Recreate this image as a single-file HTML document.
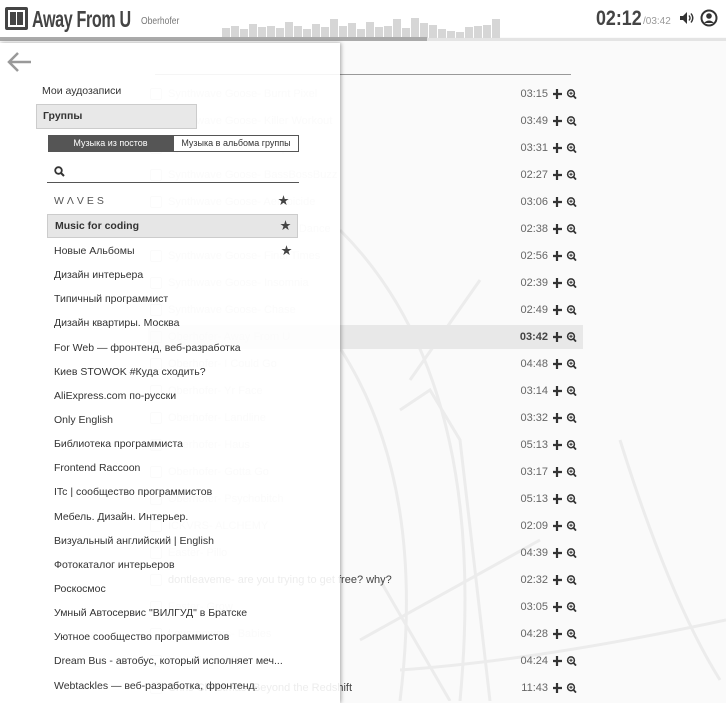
<!DOCTYPE html>
<html><head><meta charset="utf-8"><style>
*{margin:0;padding:0;box-sizing:border-box}
body{width:726px;height:701px;overflow:hidden;background:#fafafa;font-family:"Liberation Sans",Arial,"Noto Sans CJK SC",sans-serif;position:relative;color:#333}
.hdr{position:absolute;left:0;top:0;width:726px;height:37px;background:#fff}
.logo{position:absolute;left:5px;top:7px;width:23px;height:23px;border:3px solid #444;border-radius:2px;background:#fff}
.logo:before,.logo:after{content:"";position:absolute;top:2px;width:6px;height:13px;background:#444}
.logo:before{left:2px}.logo:after{right:2px}
.title{position:absolute;left:32px;top:6px;font-size:23px;font-weight:bold;color:#444;letter-spacing:-0.5px;transform:scaleX(.7);transform-origin:left;white-space:nowrap}
.sub{position:absolute;left:141px;top:16px;font-size:10px;color:#777;transform:scaleX(.85);transform-origin:left}
.bar{position:absolute;top:37px;height:4px}
.time{position:absolute;left:596px;top:7px;font-size:21px;font-weight:bold;color:#444;transform:scaleX(.85);transform-origin:left}
.tot{position:absolute;left:643px;top:16px;font-size:10px;color:#999}
.row{position:absolute;left:148px;width:435px;height:24px;font-size:11px;color:#d0d0d0;line-height:24px}
.row .pl{position:absolute;left:2px;top:6px;width:12px;height:12px;border:1.5px solid #d5d5d5;border-radius:2px}
.row .nm{position:absolute;left:20px}
.row .tm{position:absolute;right:35px;color:#666}
.row .ic{position:absolute;right:2px;top:7px;width:28px;height:10px}
.row.on{background:#e8e8e8}
.row.on .tm{font-weight:bold;color:#444}
.panel{position:absolute;left:0;top:43px;width:340px;height:660px;background:rgba(255,255,255,.9);box-shadow:1px 0 4px rgba(0,0,0,.35)}
.it{position:absolute;left:47px;width:251px;height:24px;line-height:24px;padding-left:7px;font-size:10.5px;color:#333}
.st{position:absolute;right:6px;top:0;font-size:11px;color:#444}
</style></head><body>
<div class="hdr">
<div class="logo"></div>
<div class="title">Away From U</div>
<div class="sub">Oberhofer</div>
<svg style="position:absolute;left:222px;top:14px" width="282" height="24">
<g fill="#d6d6d6">
<rect x="0" y="14" width="8" height="10"/><rect x="9" y="12" width="8" height="12"/><rect x="18" y="15" width="8" height="9"/><rect x="27" y="10" width="8" height="14"/><rect x="36" y="13" width="8" height="11"/><rect x="45" y="12" width="8" height="12"/><rect x="54" y="14" width="8" height="10"/><rect x="63" y="8" width="8" height="16"/><rect x="72" y="12" width="8" height="12"/><rect x="81" y="15" width="8" height="9"/><rect x="90" y="10" width="8" height="14"/><rect x="99" y="13" width="8" height="11"/><rect x="108" y="5" width="8" height="19"/><rect x="117" y="12" width="8" height="12"/><rect x="126" y="9" width="8" height="15"/><rect x="135" y="15" width="8" height="9"/><rect x="144" y="8" width="8" height="16"/><rect x="153" y="13" width="8" height="11"/><rect x="162" y="12" width="8" height="12"/><rect x="171" y="5" width="8" height="19"/><rect x="180" y="14" width="8" height="10"/><rect x="189" y="4" width="8" height="20"/><rect x="198" y="9" width="8" height="15"/><rect x="207" y="11" width="8" height="13"/><rect x="216" y="15" width="8" height="9"/><rect x="225" y="17" width="8" height="7"/><rect x="234" y="18" width="8" height="6"/><rect x="243" y="13" width="8" height="11"/><rect x="252" y="12" width="8" height="12"/><rect x="261" y="11" width="8" height="13"/><rect x="270" y="5" width="8" height="19"/>
</g></svg>
<div class="time">02:12</div><div class="tot">/03:42</div>
<svg style="position:absolute;left:679px;top:11px" width="16" height="14" viewBox="0 0 16 14"><path d="M1 5h3l4-4v12l-4-4H1z" fill="#333"/><path d="M10 4.5q2 2.5 0 5M12 2.5q3.5 4.5 0 9" fill="none" stroke="#333" stroke-width="1.4"/></svg>
<svg style="position:absolute;left:700px;top:9px" width="18" height="18" viewBox="0 0 18 18"><circle cx="9" cy="9" r="7.5" fill="none" stroke="#333" stroke-width="2"/><circle cx="9" cy="7" r="2.8" fill="#333"/><path d="M4 14 Q9 9 14 14" fill="#333"/></svg>
</div>
<div class="bar" style="left:0;width:427px;background:#aaa"></div>
<div class="bar" style="left:427px;width:299px;background:#e4e4e4;top:38px;height:3px"></div>
<svg style="position:absolute;left:340px;top:200px" width="386" height="501"><g fill="none" stroke="#ececec" stroke-width="3"><path d="M0 30 Q150 180 120 501"/><path d="M-20 120 Q90 260 60 501"/><path d="M70 180 L140 80"/><path d="M60 210 L90 190 L120 240 L150 501"/><path d="M20 440 L200 340"/><path d="M40 380 L110 501"/><path d="M280 240 Q330 400 380 480"/><path d="M60 470 Q200 460 386 420"/></g></svg>
<div style="position:absolute;left:155px;top:74px;width:416px;height:1px;background:#999"></div>
<div id="tracks"></div>
<div class="panel">
<svg style="position:absolute;left:6px;top:8px" width="26" height="22"><path d="M25 11H3M12 2L3 11l9 9" fill="none" stroke="#999" stroke-width="2.5"/></svg>
<div style="position:absolute;left:42px;top:42px;font-size:10.5px;color:#333">Мои аудозаписи</div>
<div style="position:absolute;left:36px;top:61px;width:161px;height:25px;background:#e8e8e8;border:1px solid #ccc;font-size:10.5px;font-weight:bold;line-height:23px;padding-left:6px">Группы</div>
<div style="position:absolute;left:48px;top:92px;width:125px;height:17px;background:#555;color:#fff;font-size:9px;line-height:17px;text-align:center">Музыка из постов</div>
<div style="position:absolute;left:173px;top:92px;width:126px;height:17px;border:1px solid #555;color:#333;font-size:9px;line-height:15px;text-align:center;background:#fff">Музыка в альбома группы</div>
<svg style="position:absolute;left:54px;top:123px" width="11" height="11" viewBox="0 0 11 11"><circle cx="4.5" cy="4.5" r="3.3" fill="none" stroke="#333" stroke-width="1.8"/><path d="M7 7l3 3" stroke="#333" stroke-width="2"/></svg>
<div style="position:absolute;left:47px;top:139px;width:252px;height:1px;background:#555"></div>
<div class="it" style="top:146px;letter-spacing:3px;color:#555">WΛVES<span class="st">★</span></div>
<div class="it" style="top:171px;background:#e6e6e6;border:1px solid #ccc;font-weight:bold;line-height:22px">Music for coding<span class="st">★</span></div>
<div class="it" style="top:196px">Новые Альбомы<span class="st">★</span></div>
<div class="it" style="top:220px">Дизайн интерьера</div>
<div class="it" style="top:244px">Типичный программист</div>
<div class="it" style="top:268px">Дизайн квартиры. Москва</div>
<div class="it" style="top:293px">For Web — фронтенд, веб-разработка</div>
<div class="it" style="top:317px">Киев STOWOK #Куда сходить?</div>
<div class="it" style="top:341px">AliExpress.com по-русски</div>
<div class="it" style="top:365px">Only English</div>
<div class="it" style="top:389px">Библиотека программиста</div>
<div class="it" style="top:413px">Frontend Raccoon</div>
<div class="it" style="top:437px">ITc | сообщество программистов</div>
<div class="it" style="top:462px">Мебель. Дизайн. Интерьер.</div>
<div class="it" style="top:486px">Визуальный английский | English</div>
<div class="it" style="top:510px">Фотокаталог интерьеров</div>
<div class="it" style="top:534px">Роскосмос</div>
<div class="it" style="top:558px">Умный Автосервис "ВИЛГУД" в Братске</div>
<div class="it" style="top:582px">Уютное сообщество программистов</div>
<div class="it" style="top:606px">Dream Bus - автобус, который исполняет меч...</div>
<div class="it" style="top:631px">Webtackles — веб-разработка, фронтенд.</div>
</div>
<script>
var t=[["Synthwave Goose- Burnt Pixel","03:15"],["Synthwave Goose- Killer Workout","03:49"],["Synthwave Goose- Eclipse","03:31"],["Synthwave Goose- BassBossBuzz","02:27"],["Synthwave Goose- Aerobicide","03:06"],["Synthwave Goose- Dance Dance","02:38"],["Synthwave Goose- Final Times","02:56"],["Synthwave Goose- Insomnia","02:39"],["Synthwave Goose- Chase","02:49"],["Oberhofer- Away From U","03:42"],["Oberhofer- I Could Go","04:48"],["Oberhofer- Yr Face","03:14"],["Oberhofer- Landline","03:32"],["Oberhofer- Haus","05:13"],["Oberhofer- Gotta Go","03:17"],["Oberhofer- Psychobitch","05:13"],["ICKVRS- ALCHEMY","02:09"],["Easter- Pillo","04:39"],["dontleaveme- are you trying to get free? why?","02:32"],["Easter- Grow","03:05"],["Loverpowers- Babies","04:28"],["Lost Kings- V.M","04:24"],["Chris Christmas- Beyond the Redshift","11:43"]];
var ic='<svg class="ic" viewBox="0 0 28 10"><path d="M4 0v10M-1 5h10" stroke="#333" stroke-width="2.2"/><circle cx="18" cy="4.3" r="3.4" fill="none" stroke="#333" stroke-width="1.5"/><path d="M20.5 6.8l2.5 2.8" stroke="#333" stroke-width="1.8"/><path d="M18 2.7v3.2M16.4 4.3h3.2" stroke="#333" stroke-width="1"/></svg>';
var h="";t.forEach(function(r,i){h+='<div class="row'+(i==9?' on':'')+'" style="top:'+(82+i*27)+'px"><span class="pl"></span><span class="nm"'+(i==18||i==22?' style="color:#444"':'')+'>'+r[0]+'</span><span class="tm">'+r[1]+'</span>'+ic+'</div>'});
document.getElementById("tracks").innerHTML=h;
</script>
</body></html>
